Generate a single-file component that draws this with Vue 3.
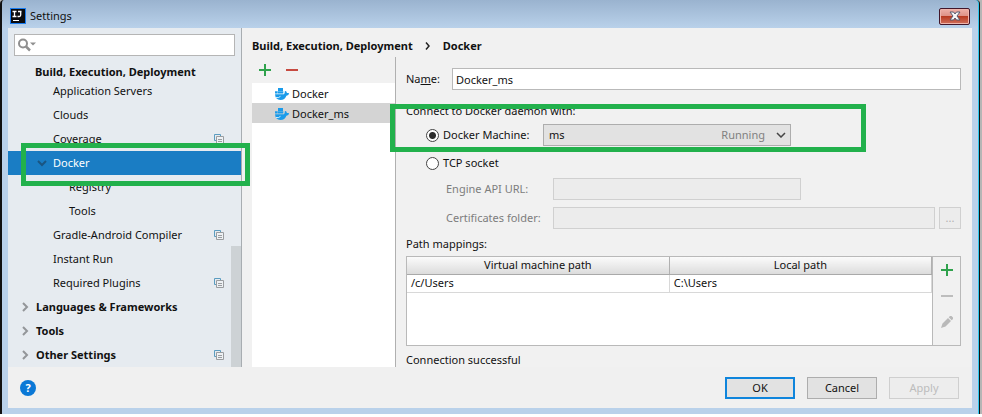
<script setup>
import { ref } from 'vue'

const treeRows = [
  { label: 'Application Servers', level: 1 },
  { label: 'Clouds', level: 1 },
  { label: 'Coverage', level: 1, project: true },
  { label: 'Docker', level: 1, open: true, selected: true },
  { label: 'Registry', level: 2 },
  { label: 'Tools', level: 2 },
  { label: 'Gradle-Android Compiler', level: 1, project: true },
  { label: 'Instant Run', level: 1 },
  { label: 'Required Plugins', level: 1, project: true },
  { label: 'Languages & Frameworks', level: 0 },
  { label: 'Tools', level: 0 },
  { label: 'Other Settings', level: 0, project: true },
]
const servers = ['Docker', 'Docker_ms']
const current = ref('Docker_ms')
const name = ref('Docker_ms')
const mode = ref('machine')
const machine = ref('ms')
const query = ref('')
const mappings = [{ vm: '/c/Users', local: 'C:\\Users' }]
</script>

<template>
  <div class="screen">
    <div class="window">
      <header class="titlebar">
        <svg class="logo" viewBox="0 0 16 16" aria-hidden="true">
          <rect width="16" height="16" fill="#1a7cf0" />
          <rect x="1" y="1" width="14" height="14" fill="#0b0b0e" />
          <path d="M2.500 3.500h4M4.500 3.500v5M2.500 8.500h4M8 3.500h3.500M10.700 3.500v3.500q0 1.500-1.500 1.500H7.500" fill="none" stroke="#fff" stroke-width="1.300" />
          <path d="M3 12.500h6" stroke="#fff" />
        </svg>
        <span class="title">Settings</span>
        <button class="close" type="button" aria-label="Close">
          <svg viewBox="0 0 12 10" aria-hidden="true">
            <path d="M1 1h3.500L6 3l1.500-2H11L8 5l3 4H7.500L6 7 4.500 9H1l3-4z" fill="#f7f7f7" stroke="#565c70" />
          </svg>
        </button>
      </header>

      <div class="body">
        <aside class="sidebar">
          <div class="search">
            <svg viewBox="0 0 18 14" aria-hidden="true">
              <circle cx="5" cy="5.500" r="4" fill="none" stroke="#8f8f8f" stroke-width="2" />
              <path d="M8 8.500l4 4" stroke="#8f8f8f" stroke-width="2.500" />
              <path d="M12 4.500h6l-3 3z" fill="#8f8f8f" />
            </svg>
            <input v-model="query" type="text" aria-label="Search settings" />
          </div>
          <h2>Build, Execution, Deployment</h2>
          <ul class="tree" role="tree">
            <li
              v-for="(row, i) in treeRows"
              :key="i"
              role="treeitem"
              :class="['row', 'level' + row.level, { selected: row.selected }]"
            >
              <svg v-if="row.open" class="arrow" viewBox="0 0 10 10" aria-hidden="true">
                <path d="M1 3l4 4 4-4" fill="none" stroke="#1a5582" stroke-width="2" />
              </svg>
              <svg v-else-if="row.level === 0" class="arrow" viewBox="0 0 10 10" aria-hidden="true">
                <path d="M3 1l4 4-4 4" fill="none" stroke="#939699" stroke-width="2" />
              </svg>
              <span>{{ row.label }}</span>
              <svg v-if="row.project" class="copy" viewBox="0 0 10 10" aria-hidden="true">
                <path d="M2.500 6.500h-2v-6h6v2" fill="none" stroke="#5b9cc0" />
                <path d="M2.500 2.500h7v7h-7z" fill="#eef1f4" stroke="#9a9da0" />
                <path d="M4 5.500h4M4 7.500h4" stroke="#9a9da0" />
              </svg>
              <i v-if="row.selected" class="mark"></i>
            </li>
          </ul>
          <div class="scrollbar"></div>
        </aside>

        <main class="main">
          <nav class="crumbs">
            <span>Build, Execution, Deployment</span>
            <svg viewBox="0 0 6 10" aria-hidden="true">
              <path d="M1 1.500l3 3.500-3 3.500" fill="none" stroke="#222" stroke-width="1.500" />
            </svg>
            <span>Docker</span>
          </nav>
          <div class="columns">
            <section class="servers">
              <div class="tools">
                <button type="button" aria-label="Add">
                  <svg viewBox="0 0 12 12"><path d="M0 6h12M6 0v12" stroke="#2fa24c" stroke-width="2" /></svg>
                </button>
                <button type="button" aria-label="Remove">
                  <svg viewBox="0 0 12 12"><path d="M0 6h12" stroke="#c74a40" stroke-width="2" /></svg>
                </button>
              </div>
              <ul class="list">
                <li v-for="s in servers" :key="s" :class="{ active: s === current }" @click="current = s">
                  <svg viewBox="0 0 14 12" aria-hidden="true">
                    <path d="M3 0h5v3H3zM0 3.200h2.700v2.300H0zM3 3.200h5.300v2.300H3zM0 6.300h9q1-.8.800-3l1.200-.3 1 2h2l-.6 2-2 .8q-1.400 4.200-6 4.200Q.5 12 0 6.300z" fill="#1a9bea" />
                    <path d="M1 9.500q2.500.8 4.500-1.200" fill="none" stroke="#fff" stroke-width=".8" />
                  </svg>
                  <span>{{ s }}</span>
                </li>
              </ul>
            </section>

            <form class="form" @submit.prevent>
              <div class="field name">
                <label for="name">Na<u>m</u>e:</label>
                <input id="name" v-model="name" type="text" />
              </div>
              <fieldset>
                <legend>Connect to Docker daemon with:</legend>
                <div class="field machine">
                  <label class="radio"><input v-model="mode" type="radio" name="mode" value="machine" />Docker Machine:</label>
                  <div class="combo">
                    <select v-model="machine" aria-label="Docker Machine">
                      <option>ms</option>
                    </select>
                    <span class="status">Running</span>
                    <svg viewBox="0 0 10 6" aria-hidden="true">
                      <path d="M1 1l4 4 4-4" fill="none" stroke="#444" stroke-width="1.500" />
                    </svg>
                  </div>
                </div>
                <div class="field tcp">
                  <label class="radio"><input v-model="mode" type="radio" name="mode" value="tcp" />TCP socket</label>
                </div>
                <div class="field sub url">
                  <label for="url">Engine API URL:</label>
                  <input id="url" type="text" disabled />
                </div>
                <div class="field sub">
                  <label for="certs">Certificates folder:</label>
                  <input id="certs" type="text" disabled />
                  <button class="browse" type="button" disabled>...</button>
                </div>
                <i class="mark"></i>
              </fieldset>

              <h3>Path mappings:</h3>
              <div class="mappings">
                <div class="grid">
                  <table>
                    <thead>
                      <tr><th>Virtual machine path</th><th>Local path</th></tr>
                    </thead>
                    <tbody>
                      <tr v-for="m in mappings" :key="m.vm"><td>{{ m.vm }}</td><td>{{ m.local }}</td></tr>
                    </tbody>
                  </table>
                </div>
                <div class="side">
                  <button type="button" aria-label="Add mapping">
                    <svg viewBox="0 0 12 12"><path d="M0 6h12M6 0v12" stroke="#2fa24c" stroke-width="2" /></svg>
                  </button>
                  <button type="button" aria-label="Remove mapping" disabled>
                    <svg viewBox="0 0 12 12"><path d="M0 6h12" stroke="#bdbdbd" stroke-width="2" /></svg>
                  </button>
                  <button type="button" aria-label="Edit mapping" disabled>
                    <svg viewBox="0 0 12 12">
                      <path d="M0 12l1.500-4.500L7 2l3 3-5.500 5.500zM7.700 1.300L9 0h1.500L12 1.500V3l-1.300 1.300z" fill="#b9b9b9" />
                    </svg>
                  </button>
                </div>
              </div>
              <p class="result">Connection successful</p>
            </form>
          </div>
        </main>
      </div>

      <footer class="footer">
        <button class="help" type="button" aria-label="Help"><span>?</span></button>
        <button class="btn primary" type="button">OK</button>
        <button class="btn" type="button">Cancel</button>
        <button class="btn" type="button" disabled>Apply</button>
      </footer>
    </div>
  </div>
</template>

<style>
body {
  background: #fff;
}
</style>

<style scoped>
* {
  box-sizing: border-box;
}
.screen {
  font: 11px/16px "Noto Sans", "Open Sans", sans-serif;
  color: #111;
  background: #b5b5b5;
  padding-right: 2px;
}
.window {
  background: linear-gradient(#9ab3cf, #b9d1ea 28px);
  border-left: 2px solid #111;
  border-right: 1px solid #111;
  box-shadow: inset -1px 0 #2fc8ee;
  border-radius: 4px 4px 0 0;
  padding: 0 7px 6px 6px;
}
svg {
  display: block;
  flex: none;
}
button {
  font: inherit;
  color: inherit;
  padding: 0;
  border: 0;
  background: none;
}
ul {
  list-style: none;
  margin: 0;
  padding: 0;
}
.titlebar {
  display: flex;
  align-items: center;
  height: 28px;
  padding: 4px 2px 0;
}
.logo {
  width: 16px;
  height: 16px;
}
.title {
  margin-left: 4px;
  flex: 1;
}
.close {
  display: grid;
  place-items: center;
  width: 31px;
  height: 17px;
  border: 1px solid #42172a;
  border-radius: 2px;
  background: linear-gradient(#eeb0a8, #dc8f84 50%, #b83b22 50%, #d0705c);
  box-shadow: inset 0 0 0 1px #efb5ac;
}
.close svg {
  width: 12px;
  height: 10px;
}
.body {
  display: flex;
  background: #f1f1f1;
}
.sidebar {
  position: relative;
  z-index: 1;
  width: 234px;
  flex: none;
  background: #e6ebf0;
  border-right: 1px solid #a8adb1;
  padding-top: 6px;
}
.search {
  display: flex;
  align-items: center;
  height: 22px;
  margin: 0 6px;
  padding-left: 3px;
  border: 1px solid #b5b5b5;
  background: #fff;
}
.search svg {
  width: 18px;
  height: 14px;
}
.search input {
  flex: 1;
  min-width: 0;
  border: 0;
  outline: 0;
  background: none;
}
h2 {
  font-size: 11px;
  line-height: 16px;
  margin: 8px 0 -1px 27px;
}
.row {
  position: relative;
  display: flex;
  align-items: center;
  height: 24px;
  padding: 0 17px 0 45px;
}
.row span {
  flex: 1;
  white-space: nowrap;
}
.level0 {
  padding-left: 12px;
  font-weight: bold;
}
.level2 {
  padding-left: 61px;
}
.row.selected {
  padding-left: 29px;
  background: #1a7dc4;
  color: #fff;
}
.arrow {
  width: 10px;
  height: 10px;
  margin-right: 6px;
}
.copy {
  width: 10px;
  height: 10px;
}
.scrollbar {
  position: absolute;
  right: 0;
  bottom: 0;
  width: 10px;
  height: 121px;
  background: #cdd2d5;
}
.mark {
  position: absolute;
  z-index: 1;
  border: 5px solid #22b14c;
  pointer-events: none;
}
.row .mark {
  inset: -8px -9px -11px 13px;
}
.main {
  flex: 1;
  min-width: 0;
  padding: 10px 0 0 10px;
}
.crumbs {
  display: flex;
  align-items: center;
  gap: 12px;
  height: 16px;
  font-weight: bold;
}
.crumbs svg {
  width: 6px;
  height: 10px;
}
.columns {
  display: flex;
  margin-top: 3px;
}
.servers {
  display: flex;
  flex-direction: column;
  width: 144px;
  flex: none;
  border-right: 1px solid #b0b0b0;
}
.tools {
  display: flex;
  align-items: center;
  gap: 15px;
  height: 26px;
  padding-left: 7px;
}
.tools svg,
.side svg {
  width: 12px;
  height: 12px;
}
.list {
  flex: 1;
  background: #fff;
}
.list li {
  display: flex;
  align-items: center;
  gap: 3px;
  height: 20px;
  padding: 2px 0 0 23px;
}
.list svg {
  width: 14px;
  height: 12px;
}
.list .active {
  background: #d4d4d4;
}
.form {
  flex: 1;
  min-width: 0;
  padding: 11px 11px 0 10px;
}
.field {
  display: flex;
  align-items: center;
  height: 22px;
}
.name label {
  width: 46px;
}
.field input[type="text"] {
  flex: 1;
  min-width: 0;
  height: 22px;
  font: inherit;
  color: inherit;
  padding: 0 3px;
  border: 1px solid #b9b9b9;
  background: #fff;
}
fieldset {
  position: relative;
  min-width: 0;
  margin: 13px 0 0;
  padding: 0;
  border: 0;
}
legend {
  padding: 0;
}
.machine {
  margin: 5px 0 0 20px;
}
.radio {
  display: flex;
  align-items: center;
  gap: 4px;
  white-space: nowrap;
}
.machine .radio {
  width: 117px;
}
.radio input {
  appearance: none;
  width: 13px;
  height: 13px;
  margin: 0;
  border: 1px solid #444;
  border-radius: 50%;
  background: #fff;
}
.radio input:checked {
  background: radial-gradient(circle, #2c2c2c 3px, #fff 4px);
}
.combo {
  position: relative;
  width: 248px;
}
.combo select {
  appearance: none;
  display: block;
  width: 100%;
  height: 22px;
  font: inherit;
  color: inherit;
  padding: 0 5px;
  border: 1px solid #adadad;
  border-radius: 0;
  background: #e2e2e2;
}
.combo .status {
  position: absolute;
  right: 26px;
  top: 3px;
  color: #808080;
  pointer-events: none;
}
.combo svg {
  position: absolute;
  right: 5px;
  top: 8px;
  width: 10px;
  height: 6px;
  pointer-events: none;
}
.tcp {
  margin: 6px 0 0 20px;
}
.sub {
  margin: 7px 0 0 40px;
  color: #7d7d7d;
}
.sub.url {
  margin-top: 4px;
}
.sub label {
  width: 107px;
  white-space: nowrap;
}
.field input:disabled {
  border-color: #d0d0d0;
  background: #ececec;
}
.field.url input {
  flex: 0 1 248px;
}
.browse {
  width: 22px;
  height: 22px;
  margin-left: 4px;
  border: 1px solid #d0d0d0;
  background: #ececec;
  color: #b0b0b0;
}
fieldset .mark {
  inset: -15px 95px auto -16px;
  height: 48px;
}
h3 {
  font-size: 11px;
  font-weight: normal;
  margin: 7px 0 4px;
}
.mappings {
  display: flex;
  height: 90px;
  border: 1px solid #b9b9b9;
}
.grid {
  flex: 1;
  background: #fff;
}
table {
  width: 100%;
  border-collapse: collapse;
  table-layout: fixed;
}
th {
  height: 17px;
  padding: 0;
  font-weight: normal;
  line-height: 16px;
  border-bottom: 1px solid #a9a9a9;
  border-right: 1px solid #b0b0b0;
  background: linear-gradient(#fbfbfb, #dcdcdc);
}
td {
  height: 18px;
  padding: 0 4px;
  line-height: 16px;
  border-bottom: 1px solid #d8d8d8;
  border-right: 1px solid #d8d8d8;
}
.side {
  display: flex;
  flex-direction: column;
  align-items: center;
  gap: 14px;
  width: 28px;
  padding-top: 7px;
  border-left: 1px solid #b9b9b9;
}
.result {
  margin: 6px 0 -1px;
}
.footer {
  display: flex;
  align-items: center;
  gap: 12px;
  height: 41px;
  padding: 0 13px 0 12px;
  background: #f0f0f0;
}
.help {
  width: 16px;
  height: 16px;
  margin-right: auto;
  border-radius: 50%;
  background: #0a78d6;
  color: #fff;
  font-weight: bold;
  line-height: 16px;
}
.btn {
  width: 70px;
  height: 22px;
  border: 1px solid #adadad;
  background: #e2e2e2;
}
.btn.primary {
  border: 2px solid #0f85dc;
}
.btn:disabled {
  border-color: #cfcfcf;
  background: #ededed;
  color: #bcbcbc;
}
</style>
